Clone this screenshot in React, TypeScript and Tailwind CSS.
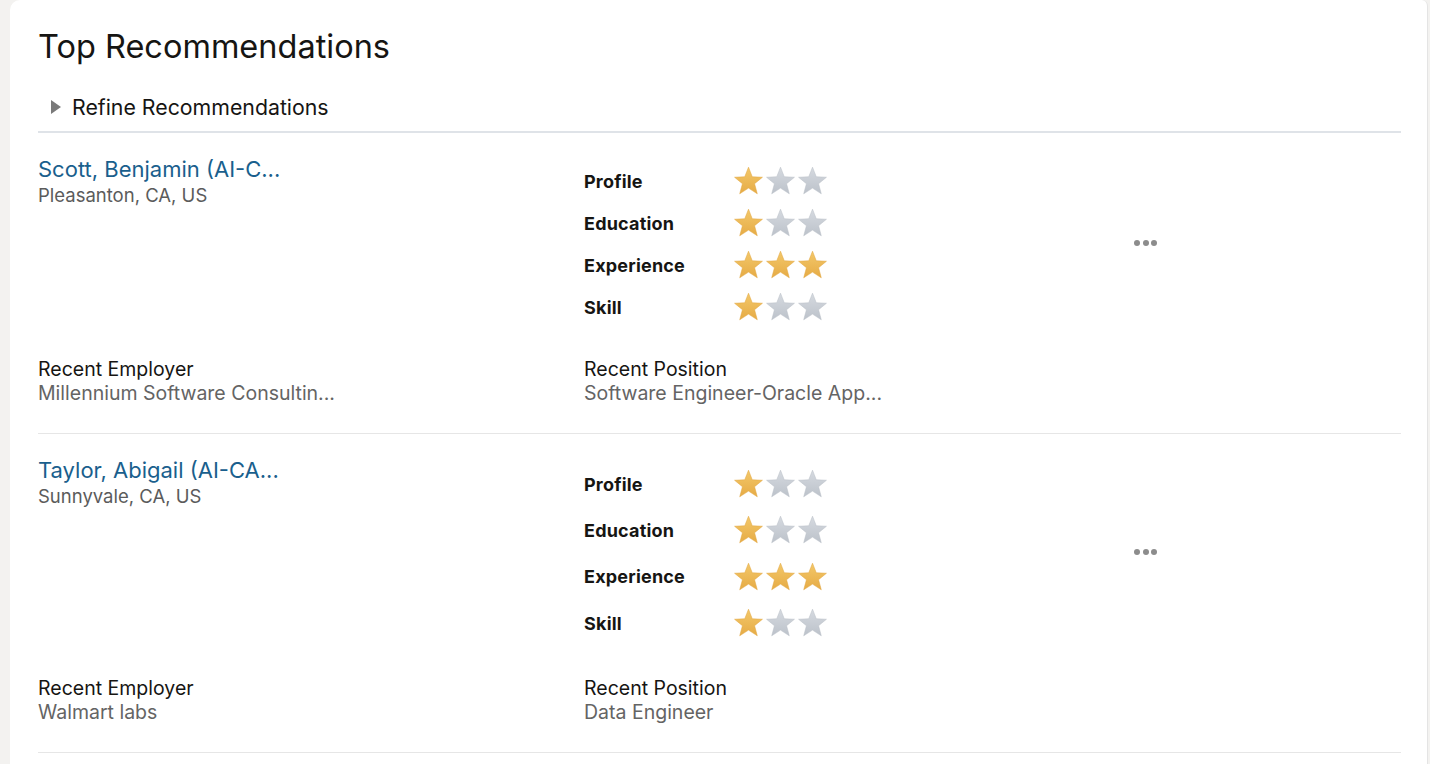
import React from "react";

const font = { fontFamily: "Inter, 'Noto Sans', sans-serif" };

function Star({ filled, id }: { filled: boolean; id: string }) {
  return (
    <svg width="31" height="30" viewBox="0 0 24 23" className="block">
      <defs>
        <linearGradient id={id} x1="0" y1="0" x2="0" y2="1">
          {filled ? (
            <>
              <stop offset="0%" stopColor="#f3c86a" />
              <stop offset="100%" stopColor="#e6ab45" />
            </>
          ) : (
            <>
              <stop offset="0%" stopColor="#d6dae0" />
              <stop offset="100%" stopColor="#bcc2ca" />
            </>
          )}
        </linearGradient>
      </defs>
      <path
        d="M12 0.8 L14.9 8.2 L22.8 8.6 L16.7 13.6 L18.8 21.4 L12 17 L5.2 21.4 L7.3 13.6 L1.2 8.6 L9.1 8.2 Z"
        fill={`url(#${id})`}
        stroke={filled ? "#e2a63f" : "#b8bec6"}
        strokeWidth="0.4"
        strokeLinejoin="round"
      />
    </svg>
  );
}

type Candidate = {
  name: string;
  location: string;
  ratings: [string, number][];
  employer: string;
  position: string;
  rowH: string;
  infoMt: string;
  pb: string;
};

const candidates: Candidate[] = [
  {
    name: "Scott, Benjamin (AI-C...",
    location: "Pleasanton, CA, US",
    ratings: [
      ["Profile", 1],
      ["Education", 1],
      ["Experience", 3],
      ["Skill", 1],
    ],
    employer: "Millennium Software Consultin...",
    position: "Software Engineer-Oracle App...",
    rowH: "h-[42px]",
    infoMt: "mt-[29px]",
    pb: "pb-[28px]",
  },
  {
    name: "Taylor, Abigail (AI-CA...",
    location: "Sunnyvale, CA, US",
    ratings: [
      ["Profile", 1],
      ["Education", 1],
      ["Experience", 3],
      ["Skill", 1],
    ],
    employer: "Walmart labs",
    position: "Data Engineer",
    rowH: "h-[46.3px]",
    infoMt: "mt-[30px]",
    pb: "pb-[28px]",
  },
];

function CandidateCard({ c, idx }: { c: Candidate; idx: number }) {
  return (
    <div className={`border-b border-[#e6e6e6] pt-[24px] ${c.pb}`}>
      <div className="grid grid-cols-[546px_550px_1fr]">
        <div className="flex flex-col">
          <div className="text-[22px] leading-[24px] text-[#1a5f8d]">{c.name}</div>
          <div className="text-[18.5px] leading-[28px] text-[#5b5b5b]">{c.location}</div>
        </div>
        <div className="mt-[3px] flex flex-col">
          {c.ratings.map(([label, n], i) => (
            <div key={label} className={`flex items-center ${c.rowH}`}>
              <div className="w-[149px] text-[18px] font-bold tracking-[0.2px] text-[#161513]">{label}</div>
              <div className="flex gap-[1px]">
                {[0, 1, 2].map((k) => (
                  <Star key={k} filled={k < n} id={`s-${idx}-${i}-${k}`} />
                ))}
              </div>
            </div>
          ))}
        </div>
        <div className="flex items-center">
          <div className="flex gap-[2.5px]">
            <span className="block h-[6px] w-[6px] rounded-full bg-[#8c8c8c]" />
            <span className="block h-[6px] w-[6px] rounded-full bg-[#8c8c8c]" />
            <span className="block h-[6px] w-[6px] rounded-full bg-[#8c8c8c]" />
          </div>
        </div>
      </div>
      <div className={`grid grid-cols-[546px_1fr] ${c.infoMt}`}>
        <div>
          <div className="text-[19.5px] leading-[24px] text-[#161513]">Recent Employer</div>
          <div className="text-[19.5px] leading-[24px] text-[#646464]">{c.employer}</div>
        </div>
        <div>
          <div className="text-[19.5px] leading-[24px] text-[#161513]">Recent Position</div>
          <div className="text-[19.5px] leading-[24px] text-[#646464]">{c.position}</div>
        </div>
      </div>
    </div>
  );
}

export default function App() {
  return (
    <div className="h-[764px] w-[1430px] overflow-hidden bg-[#f3f2f0] pl-[10px] pr-[2px]" style={font}>
      <div className="h-full rounded-tl-[10px] rounded-tr-[6px] border-r border-[#e4e4e4] bg-white pl-[28px] pr-[26px]">
        <div className="pt-[27px] text-[32.5px] leading-[40px] text-[#161513]">Top Recommendations</div>
        <div className="mt-[28px] flex items-center border-b-2 border-[#dfe3e8] pb-[12px]">
          <svg width="12" height="16" viewBox="0 0 12 16" className="ml-[12px] mr-[10px]">
            <path d="M1 1 L11 8 L1 15 Z" fill="#7a7a7a" />
          </svg>
          <span className="text-[21.3px] leading-[24px] text-[#161513]">Refine Recommendations</span>
        </div>
        {candidates.map((c, i) => (
          <CandidateCard key={c.name} c={c} idx={i} />
        ))}
      </div>
    </div>
  );
}
